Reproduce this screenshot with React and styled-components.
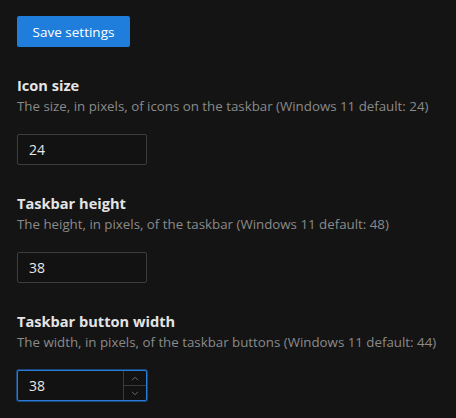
import React from "react";
import styled, { createGlobalStyle } from "styled-components";

const Global = createGlobalStyle`
  html, body { margin: 0; padding: 0; background: #141414; }
  body { font-family: "Open Sans", "Noto Sans", sans-serif; color: #e2e2e2; }
`;

const Page = styled.div`
  padding: 16px 17px;
  display: flex;
  flex-direction: column;
  align-items: flex-start;
`;

const SaveButton = styled.button`
  height: 31px;
  width: 113px;
  border: none;
  border-radius: 2px;
  background: #1f7edc;
  color: #ffffff;
  font-family: inherit;
  font-size: 13.5px;
  padding: 0;
  cursor: pointer;
`;

const Section = styled.section`
  margin-top: 27px;
  display: flex;
  flex-direction: column;
  align-items: flex-start;
`;

const Title = styled.h3`
  margin: 0;
  font-size: 14.6px;
  line-height: 22px;
  font-weight: 700;
  color: #e4e4e4;
`;

const Desc = styled.p`
  margin: 0;
  font-size: 13.3px;
  line-height: 21px;
  color: #8a8a8a;
`;

const Field = styled.div`
  margin-top: 17px;
  width: 130px;
  height: 31px;
  box-sizing: border-box;
  display: flex;
  align-items: stretch;
  background: #121212;
  border: 1px solid ${(p) => (p.$focused ? "#2b7bd6" : "#3d3d3d")};
  border-radius: 2px;
  box-shadow: ${(p) => (p.$focused ? "0 0 0 1px #17467a" : "none")};
`;

const Value = styled.input`
  flex: 1;
  min-width: 0;
  background: transparent;
  border: none;
  outline: none;
  color: #e6e6e6;
  font-family: inherit;
  font-size: 14px;
  padding: 0 0 0 11px;
`;

const Spinner = styled.div`
  width: 22px;
  display: flex;
  flex-direction: column;
  border-left: 1px solid #3a3a3a;
`;

const SpinBtn = styled.div`
  flex: 1;
  display: flex;
  align-items: center;
  justify-content: center;
  & + & { border-top: 1px solid #3a3a3a; }
`;

const Chevron = ({ up }) => (
  <svg width="8" height="5" viewBox="0 0 8 5">
    <path
      d={up ? "M1 4.2 L4 1.2 L7 4.2" : "M1 0.8 L4 3.8 L7 0.8"}
      fill="none"
      stroke="#6a6a6a"
      strokeWidth="1"
    />
  </svg>
);

const settings = [
  { title: "Icon size", desc: "The size, in pixels, of icons on the taskbar (Windows 11 default: 24)", value: "24" },
  { title: "Taskbar height", desc: "The height, in pixels, of the taskbar (Windows 11 default: 48)", value: "38" },
  { title: "Taskbar button width", desc: "The width, in pixels, of the taskbar buttons (Windows 11 default: 44)", value: "38", focused: true },
];

export default function App() {
  return (
    <>
      <Global />
      <Page>
        <SaveButton>Save settings</SaveButton>
        {settings.map((s) => (
          <Section key={s.title}>
            <Title>{s.title}</Title>
            <Desc>{s.desc}</Desc>
            <Field $focused={s.focused}>
              <Value defaultValue={s.value} readOnly />
              {s.focused && (
                <Spinner>
                  <SpinBtn><Chevron up /></SpinBtn>
                  <SpinBtn><Chevron /></SpinBtn>
                </Spinner>
              )}
            </Field>
          </Section>
        ))}
      </Page>
    </>
  );
}
